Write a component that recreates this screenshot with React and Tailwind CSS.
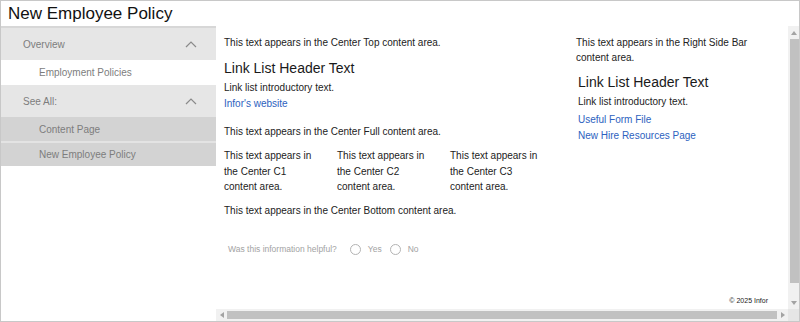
import React from "react";

const Chevron = () => (
  <svg width="12" height="7" viewBox="0 0 12 7" className="text-[#8a8a8a]">
    <polyline points="1,6 6,1 11,6" fill="none" stroke="currentColor" strokeWidth="1.2" />
  </svg>
);

const Tri = ({ dir }) => {
  const pts = {
    up: "0,4 3,0 6,4",
    down: "0,0 6,0 3,4",
    left: "4,0 4,6 0,3",
    right: "0,0 0,6 4,3",
  }[dir];
  const w = dir === "up" || dir === "down" ? 6 : 4;
  const h = dir === "up" || dir === "down" ? 4 : 6;
  return (
    <svg width={w} height={h} viewBox={`0 0 ${w} ${h}`}>
      <polygon points={pts} fill="#a3a3a3" />
    </svg>
  );
};

const Radio = ({ label }) => (
  <label className="flex items-center">
    <span className="w-[11px] h-[11px] rounded-full border border-[#b3b3b3] bg-white" />
    <span className="ml-[7px] text-[#a3a3a3]">{label}</span>
  </label>
);

const SideNav = () => (
  <div className="w-[215px] shrink-0 border-t-2 border-[#d7d7d7] text-[10px] text-[#7d7d7d]">
    <div className="h-[32px] bg-[#e6e6e6] flex items-center justify-between pl-[22px] pr-[19px]">
      <span>Overview</span>
      <Chevron />
    </div>
    <div className="h-[25px] flex items-center pl-[38px]">Employment Policies</div>
    <div className="h-[32px] bg-[#e6e6e6] flex items-center justify-between pl-[22px] pr-[19px]">
      <span>See All:</span>
      <Chevron />
    </div>
    <div className="h-[24px] bg-[#d3d3d3] flex items-center pl-[38px]">Content Page</div>
    <div className="h-[2px] bg-[#e3e3e3]" />
    <div className="h-[23px] bg-[#d3d3d3] flex items-center pl-[38px]">New Employee Policy</div>
  </div>
);

const Center = () => (
  <div className="w-[360px] shrink-0 pl-[8px] pt-[9px] text-[10px] text-[#222]">
    <p className="leading-[15px]">This text appears in the Center Top content area.</p>
    <h2 className="mt-[9px] text-[14px] leading-[18px] text-[#1a1a1a]">Link List Header Text</h2>
    <p className="mt-[3px] leading-[16px]">Link list introductory text.</p>
    <a className="block leading-[16px] text-[#2d62c0]">Infor's website</a>
    <p className="mt-[12px] leading-[15px]">This text appears in the Center Full content area.</p>
    <div className="mt-[9px] grid grid-cols-3 w-[339px] leading-[15.5px]">
      <p className="pr-[18px]">This text appears in the Center C1 content area.</p>
      <p className="pr-[18px]">This text appears in the Center C2 content area.</p>
      <p className="pr-[18px]">This text appears in the Center C3 content area.</p>
    </div>
    <p className="mt-[8px] leading-[15px]">This text appears in the Center Bottom content area.</p>
    <div className="mt-[25px] pl-[4px] flex items-center h-[14px] text-[8.5px] text-[#a3a3a3]">
      <span>Was this information helpful?</span>
      <div className="ml-[13px] flex items-center gap-[8px]">
        <Radio label="Yes" />
        <Radio label="No" />
      </div>
    </div>
  </div>
);

const RightBar = () => (
  <div className="flex-1 pt-[9px] pr-[16px] text-[10px] text-[#222]">
    <p className="leading-[15px]">This text appears in the Right Side Bar content area.</p>
    <div className="pl-[2px]">
      <h2 className="mt-[8px] text-[14px] leading-[18px] text-[#1a1a1a]">Link List Header Text</h2>
      <p className="mt-[3px] leading-[16px]">Link list introductory text.</p>
      <a className="block mt-[2px] leading-[16px] text-[#2d62c0]">Useful Form File</a>
      <a className="block leading-[16px] text-[#2d62c0]">New Hire Resources Page</a>
    </div>
  </div>
);

export default function App() {
  return (
    <div
      className="w-[800px] h-[322px] border border-[#c8c8c8] bg-white overflow-hidden flex flex-col"
      style={{ fontFamily: '"Liberation Sans", Arial, sans-serif' }}
    >
      <div className="h-[25px] shrink-0 pl-[7px] text-[17px] leading-[25px] text-[#111]">
        New Employee Policy
      </div>
      <div className="flex-1 flex min-h-0">
        <SideNav />
        <div className="flex-1 flex flex-col min-w-0">
          <div className="flex-1 flex min-h-0">
            <div className="flex-1 flex flex-col min-w-0">
              <div className="flex flex-1">
                <Center />
                <RightBar />
              </div>
              <div className="text-right pr-[20px] pb-[3px] text-[7px] leading-[10px] text-[#222]">
                © 2025 Infor
              </div>
            </div>
            {/* vertical scrollbar */}
            <div className="w-[11px] shrink-0 bg-[#f1f1f1] flex flex-col items-center">
              <div className="h-[13px] flex items-center justify-center">
                <Tri dir="up" />
              </div>
              <div className="w-[9px] ml-[2px] h-[244px] bg-[#c1c1c1]" />
              <div className="flex-1 flex items-end justify-center pb-[4px]">
                <Tri dir="down" />
              </div>
            </div>
          </div>
          {/* horizontal scrollbar */}
          <div className="h-[12px] shrink-0 flex">
            <div className="flex-1 bg-[#f1f1f1] flex items-center">
              <div className="w-[11px] flex justify-center">
                <Tri dir="left" />
              </div>
              <div className="w-[550px] h-[8px] bg-[#c1c1c1]" />
              <div className="flex-1 flex justify-center">
                <Tri dir="right" />
              </div>
            </div>
            <div className="w-[11px] bg-[#e6e6e6]" />
          </div>
        </div>
      </div>
    </div>
  );
}
